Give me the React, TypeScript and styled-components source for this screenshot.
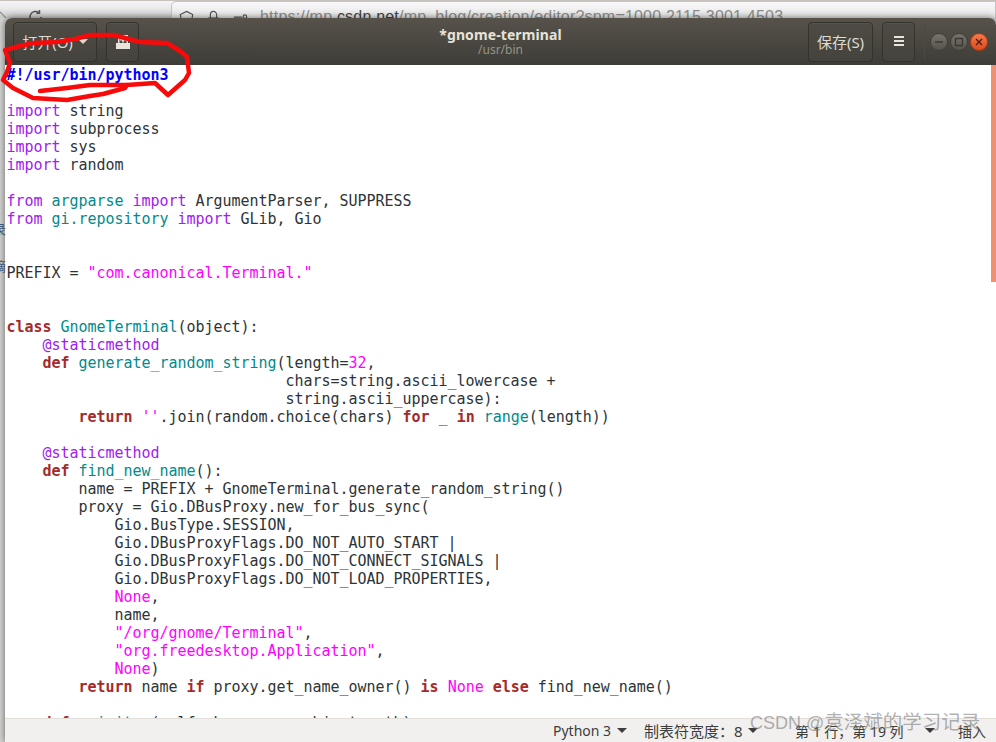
import React, { FC } from 'react'
import styled, { createGlobalStyle } from 'styled-components'

type Kind = 'plain' | 'shebang' | 'include' | 'module' | 'keyword' | 'string' | 'deco' | 'number' | 'name' | 'builtin' | 'constant'
type Token = [Kind, string]

const p = (text: string): Token => ['plain', text]
const kw = (text: string): Token => ['keyword', text]
const inc = (text: string): Token => ['include', text]
const mod = (text: string): Token => ['module', text]
const str = (text: string): Token => ['string', text]

const CODE: Token[][] = [
  [['shebang', '#!/usr/bin/python3']],
  [],
  [inc('import'), p(' string')],
  [inc('import'), p(' subprocess')],
  [inc('import'), p(' sys')],
  [inc('import'), p(' random')],
  [],
  [inc('from'), p(' '), mod('argparse'), p(' '), inc('import'), p(' ArgumentParser, SUPPRESS')],
  [inc('from'), p(' '), mod('gi.repository'), p(' '), inc('import'), p(' GLib, Gio')],
  [],
  [],
  [p('PREFIX = '), str('"com.canonical.Terminal."')],
  [],
  [],
  [kw('class'), p(' '), ['name', 'GnomeTerminal'], p('(object):')],
  [p('    '), ['deco', '@staticmethod']],
  [p('    '), kw('def'), p(' '), ['name', 'generate_random_string'], p('(length='), ['number', '32'], p(',')],
  [p('                               chars=string.ascii_lowercase +')],
  [p('                               string.ascii_uppercase):')],
  [p('        '), kw('return'), p(' '), str("''"), p('.join(random.choice(chars) '), kw('for'), p(' _ '), kw('in'), p(' '), ['builtin', 'range'], p('(length))')],
  [],
  [p('    '), ['deco', '@staticmethod']],
  [p('    '), kw('def'), p(' '), ['name', 'find_new_name'], p('():')],
  [p('        name = PREFIX + GnomeTerminal.generate_random_string()')],
  [p('        proxy = Gio.DBusProxy.new_for_bus_sync(')],
  [p('            Gio.BusType.SESSION,')],
  [p('            Gio.DBusProxyFlags.DO_NOT_AUTO_START |')],
  [p('            Gio.DBusProxyFlags.DO_NOT_CONNECT_SIGNALS |')],
  [p('            Gio.DBusProxyFlags.DO_NOT_LOAD_PROPERTIES,')],
  [p('            '), ['constant', 'None'], p(',')],
  [p('            name,')],
  [p('            '), str('"/org/gnome/Terminal"'), p(',')],
  [p('            '), str('"org.freedesktop.Application"'), p(',')],
  [p('            '), ['constant', 'None'], p(')')],
  [p('        '), kw('return'), p(' name '), kw('if'), p(' proxy.get_name_owner() '), kw('is'), p(' '), ['constant', 'None'], p(' '), kw('else'), p(' find_new_name()')],
  [],
  [p('    '), kw('def'), p(' '), ['name', '__init__'], p('(self, bus_name, object_path):')],
]

const TOKEN_STYLE: Record<Kind, string> = {
  plain: 'color: #2e3436;',
  shebang: 'color: #0000ff; font-weight: bold;',
  include: 'color: #a020f0;',
  module: 'color: #008b8b;',
  keyword: 'color: #a52a2a; font-weight: bold;',
  string: 'color: #ff00ff;',
  deco: 'color: #a020f0;',
  number: 'color: #ff00ff;',
  name: 'color: #008b8b;',
  builtin: 'color: #008b8b;',
  constant: 'color: #ff00ff;',
}

const GlobalStyle = createGlobalStyle`
  html, body {
    margin: 0;
    height: 100%;
    overflow: hidden;
  }
  #root {
    height: 100%;
  }
`

const UI_FONT = `"Noto Sans", "Noto Sans CJK SC", sans-serif`

const Page = styled.div`
  position: relative;
  display: flex;
  flex-direction: column;
  width: 996px;
  height: 742px;
  overflow: hidden;
  background: #d4d4d2;
  font-family: ${UI_FONT};
`

const BrowserBar = styled.div`
  flex: 0 0 18px;
  display: flex;
  align-items: flex-start;
  overflow: hidden;
  border-top: 1px solid #c6c3bf;
  box-sizing: border-box;
  background: linear-gradient(#f4f4f4, #ececec 40%, #c9c9c9);
  color: #6b6b6b;
`

const BackIcon = styled.svg`
  flex: none;
  margin-top: 10px;
  width: 6px;
  height: 14px;
`

const ReloadIcon = styled.svg`
  flex: none;
  margin: 8px 0 0 22px;
  width: 16px;
  height: 16px;
`

const UrlBox = styled.div`
  display: flex;
  align-items: flex-start;
  gap: 12px;
  margin-left: 127px;
  padding: 7px 0 0 7px;
  flex: 1;
  height: 40px;
  border: 1px solid #c4c4c4;
  border-radius: 5px 0 0 0;
  background: linear-gradient(#f8f8f8, #d9d9d9 60%);
`

const UrlIcon = styled.svg`
  flex: none;
  width: 15px;
  height: 18px;
`

const UrlText = styled.span`
  margin-top: -1px;
  font: 16px/18px "Liberation Sans", sans-serif;
  letter-spacing: 0.2px;
  color: #8c8c8c;
  white-space: nowrap;

  b {
    font-weight: normal;
    color: #444;
  }
`

const Window = styled.div`
  flex: 1;
  min-height: 0;
  display: flex;
  flex-direction: column;
  margin-left: 5px;
  border-radius: 7px 7px 0 0;
  overflow: hidden;
  box-shadow: 0 0 7px rgba(0, 0, 0, 0.55);
`

const HeaderBar = styled.header`
  flex: 0 0 47px;
  display: grid;
  grid-template-columns: 1fr auto 1fr;
  align-items: center;
  box-sizing: border-box;
  padding: 0 8px;
  background: linear-gradient(#57534b, #3e3c37);
`

const HeaderGroup = styled.div<{ $end?: boolean }>`
  display: flex;
  align-items: center;
  gap: 9px;
  justify-content: ${(props) => (props.$end ? 'flex-end' : 'flex-start')};
`

const ToolButton = styled.div<{ $width: number }>`
  display: flex;
  align-items: center;
  justify-content: center;
  gap: 5px;
  box-sizing: border-box;
  width: ${(props) => props.$width}px;
  height: 40px;
  border: 1px solid #34322d;
  border-radius: 4px;
  background: linear-gradient(#4e4b44, #45433d);
  box-shadow: inset 0 1px 0 rgba(255, 255, 255, 0.05);
  color: #dfdbd2;
  font-size: 15px;
  white-space: nowrap;
`

const Caret = styled.span`
  flex: none;
  width: 0;
  height: 0;
  border-left: 5px solid transparent;
  border-right: 5px solid transparent;
  border-top: 5px solid currentColor;
`

const Hamburger = styled.span`
  display: block;
  width: 10px;
  height: 2px;
  color: #e8e4dc;
  background: currentColor;
  box-shadow: 0 -4px 0 currentColor, 0 4px 0 currentColor;
  margin-top: -1px;
`

const Divider = styled.span`
  width: 1px;
  height: 36px;
  background: #4b4943;
`

const Title = styled.div`
  text-align: center;
  line-height: 15px;
`

const TitleMain = styled.div`
  color: #e6e2da;
  font-size: 14px;
  font-weight: bold;
  letter-spacing: 0.1px;
`

const TitleSub = styled.div`
  color: #98948b;
  font-size: 12px;
`

const WindowControls = styled.div`
  display: flex;
  gap: 2px;
  margin-left: -4px;
`

const WindowButton = styled.span<{ $close?: boolean }>`
  display: flex;
  align-items: center;
  justify-content: center;
  box-sizing: border-box;
  width: 18px;
  height: 18px;
  border-radius: 50%;
  border: 1px solid ${(props) => (props.$close ? '#a53c17' : '#403e39')};
  background: ${(props) =>
    props.$close
      ? 'linear-gradient(#f47a4a, #dd4a1c)'
      : 'linear-gradient(#77746c, #55534d)'};
  color: ${(props) => (props.$close ? '#4a1a08' : '#3a3833')};
`

const ControlIcon = styled.svg`
  width: 10px;
  height: 10px;
`

const Editor = styled.main`
  position: relative;
  flex: 1;
  min-height: 0;
  overflow: hidden;
  background: #fff;
  padding: 1px 0 0 1.5px;
`

const CodeLine = styled.div`
  height: 18px;
  font: 15px/18px "DejaVu Sans Mono", monospace;
  letter-spacing: -0.03px;
  white-space: pre;
  color: #2e3436;
`

const Tok = styled.span<{ $kind: Kind }>`
  ${(props) => TOKEN_STYLE[props.$kind]}
`

const ScrollThumb = styled.div`
  position: absolute;
  top: 0;
  right: 0;
  width: 5px;
  height: 217px;
  background: #f09070;
`

const StatusBar = styled.footer`
  flex: 0 0 24px;
  display: flex;
  align-items: center;
  justify-content: flex-end;
  padding-right: 10px;
  background: #f1f0ee;
  border-top: 1px solid #e2dfdb;
  box-sizing: border-box;
  color: #3c3c3c;
  font-size: 14px;
  white-space: nowrap;
`

const StatusItem = styled.span<{ $width: number; $gap: number; $size?: number }>`
  display: flex;
  align-items: center;
  justify-content: space-between;
  width: ${(props) => props.$width}px;
  margin-right: ${(props) => props.$gap}px;
  font-size: ${(props) => props.$size ?? 14}px;
  color: #3d3d3d;
`

const Insert = styled.span`
  font-size: 14px;
`

const Watermark = styled.div`
  position: absolute;
  left: 750px;
  bottom: 7px;
  font: 18px/24px "Liberation Sans", "Noto Sans CJK SC", sans-serif;
  color: rgba(110, 110, 110, 0.55);
  white-space: nowrap;
  pointer-events: none;
`

const WatermarkName = styled.span`
  font-size: 19.5px;
`

const Scribble = styled.svg`
  position: absolute;
  left: 0;
  top: 0;
  width: 200px;
  height: 110px;
  pointer-events: none;
`

const SideScrap = styled.span<{ $top: number }>`
  position: absolute;
  left: -7px;
  top: ${(props) => props.$top}px;
  font-size: 13px;
  line-height: 14px;
  color: #3b5a7a;
`

const App: FC = () => (
  <Page>
    <GlobalStyle />
    <BrowserBar>
      <BackIcon viewBox="0 0 6 14" fill="none" stroke="#8a8a8a" strokeWidth="1.2">
        <path d="M0 1 6 7 0 13" />
      </BackIcon>
      <ReloadIcon viewBox="0 0 16 16" fill="none" stroke="#555" strokeWidth="1.5">
        <path d="M13 8a5.5 5.5 0 1 1-2-4.3" />
        <path d="M11.5 1v3.2H8.3" />
      </ReloadIcon>
      <UrlBox>
        <UrlIcon viewBox="0 0 17 18" fill="none" stroke="#555" strokeWidth="1.3">
          <path d="M8.5 1.500 15.500 5l-1.500 9-5.500 3-5.500-3-1.500-9z" />
        </UrlIcon>
        <UrlIcon viewBox="0 0 17 18" fill="none" stroke="#555" strokeWidth="1.3">
          <path d="M5 9V5a3.500 3.500 0 0 1 7 0v4M3 9h11v7H3z" />
        </UrlIcon>
        <UrlIcon viewBox="0 0 17 18" fill="none" stroke="#555" strokeWidth="1.3">
          <path d="M1 8h9M1 13h13" />
          <circle cx="13.500" cy="7.500" r="2" />
        </UrlIcon>
        <UrlText>
          https://mp.<b>csdn.net</b>/mp_blog/creation/editor?spm=1000.2115.3001.4503
        </UrlText>
      </UrlBox>
    </BrowserBar>

    <Window>
      <HeaderBar>
        <HeaderGroup>
          <ToolButton $width={84}>
            打开(O)
            <Caret />
          </ToolButton>
          <ToolButton $width={33}>
            <svg width="16" height="16" viewBox="0 0 16 16" fill="#e8e4dc">
              <path d="M1 15V9h2V1h1.500v8h7V1H13v8h2v6zM7.200 3h1.600v2H11v1.500H8.800v2H7.200v-2H5V5h2.200z" />
              <path d="M3 1h10v1.200H3z" />
            </svg>
          </ToolButton>
        </HeaderGroup>
        <Title>
          <TitleMain>*gnome-terminal</TitleMain>
          <TitleSub>/usr/bin</TitleSub>
        </Title>
        <HeaderGroup $end>
          <ToolButton $width={65}>保存(S)</ToolButton>
          <ToolButton $width={33}>
            <Hamburger />
          </ToolButton>
          <Divider />
          <WindowControls>
            <WindowButton>
              <ControlIcon viewBox="0 0 10 10" stroke="currentColor" strokeWidth="1.300">
                <path d="M1 5h8" />
              </ControlIcon>
            </WindowButton>
            <WindowButton>
              <ControlIcon viewBox="0 0 10 10" fill="none" stroke="currentColor" strokeWidth="1.300">
                <path d="M1.500 1.500h7v7h-7z" />
              </ControlIcon>
            </WindowButton>
            <WindowButton $close>
              <ControlIcon viewBox="0 0 10 10" stroke="currentColor" strokeWidth="1.300">
                <path d="m2 2 6 6M8 2 2 8" />
              </ControlIcon>
            </WindowButton>
          </WindowControls>
        </HeaderGroup>
      </HeaderBar>

      <Editor>
        {CODE.map((line, i) => (
          <CodeLine key={i}>
            {line.map(([kind, text], j) => (
              <Tok key={j} $kind={kind}>
                {text}
              </Tok>
            ))}
          </CodeLine>
        ))}
        <ScrollThumb />
      </Editor>

      <StatusBar>
        <StatusItem $width={74} $gap={17}>
          Python 3
          <Caret />
        </StatusItem>
        <StatusItem $width={114} $gap={37} $size={15}>
          制表符宽度：8
          <Caret />
        </StatusItem>
        <StatusItem $width={140} $gap={23}>
          第 1 行，第 19 列
          <Caret />
        </StatusItem>
        <Insert>插入</Insert>
      </StatusBar>
    </Window>

    <SideScrap $top={222}>录</SideScrap>
    <SideScrap $top={259}>摘</SideScrap>

    <Scribble viewBox="0 0 200 110" fill="none" stroke="#f80a0a" strokeWidth="4.5" strokeLinejoin="round" strokeLinecap="round">
      <path d="M5 50 L20 46 L33 43 L57 42 L75 39 L90 35 L113 35 L125 38 L140 42 L167 43 L180 51 L187 57 L189 73 L185 80 L168 95 L155 83 L127 85 L125 88 L103 94 L90 96 L67 100 L33 98 L13 88 L3 80 L7 72 L10 63 Z" />
      <path d="M127 85 L90 85 L67 88 L40 91" />
    </Scribble>

    <Watermark>
      CSDN @<WatermarkName>袁泽斌的学习记录</WatermarkName>
    </Watermark>
  </Page>
)

export default App
